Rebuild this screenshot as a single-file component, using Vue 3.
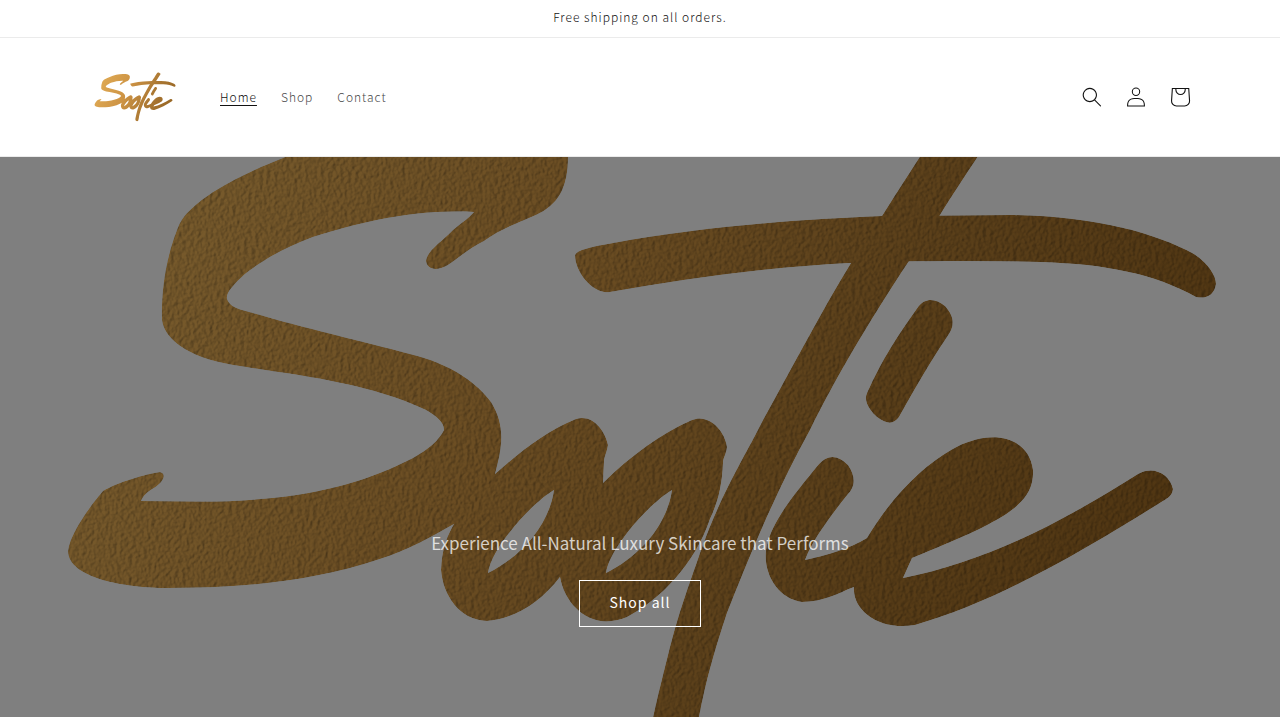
<script setup>
    import { ref } from 'vue';

    const announcement = 'Free shipping on all orders.'

    const links = [
        { id: 'home', label: 'Home' },
        { id: 'shop', label: 'Shop' },
        { id: 'contact', label: 'Contact' },
    ]
    const current = ref('home')
</script>

<template>
    <div class="page">
        <!-- brush mark shared by the header logo and the banner -->
        <svg class="defs" width="0" height="0" aria-hidden="true">
            <defs>
                <linearGradient id="gold" gradientUnits="userSpaceOnUse" x1="150" y1="150" x2="1130" y2="620">
                    <stop offset="0" stop-color="#e0ab55" />
                    <stop offset="0.4" stop-color="#cd9344" />
                    <stop offset="0.7" stop-color="#ac7934" />
                    <stop offset="1" stop-color="#976624" />
                </linearGradient>
                <linearGradient id="foil" gradientUnits="userSpaceOnUse" x1="150" y1="150" x2="1130" y2="620">
                    <stop offset="0" stop-color="#f2b85a" />
                    <stop offset="0.4" stop-color="#d69a45" />
                    <stop offset="0.7" stop-color="#b67f33" />
                    <stop offset="1" stop-color="#a06b24" />
                </linearGradient>
                <filter id="grain" x="0" y="0" width="100%" height="100%" color-interpolation-filters="sRGB">
                    <feTurbulence type="fractalNoise" baseFrequency="0.26" numOctaves="2" seed="4" result="noise" />
                    <feDiffuseLighting in="noise" surfaceScale="0.8" diffuseConstant="1.1" lighting-color="#ffffff" result="light">
                        <feDistantLight azimuth="200" elevation="58" />
                    </feDiffuseLighting>
                    <feBlend in="SourceGraphic" in2="light" mode="multiply" result="lit" />
                    <feComposite in="lit" in2="SourceGraphic" operator="in" />
                </filter>
                <g id="mark">
                    <path fill-rule="evenodd" d="M568 157C568 188 558 205 536 215C516 224 500 229 484 241C468 249 460 257 448 265C436 272 427 269 426 261C427 251 440 243 453 230C461 223 468 219 474 212C410 209 355 224 313 237C283 248 260 262 245 274C232 286 226 293 227 299C230 307 238 309 253 313C300 327 365 342 410 354C452 364 478 384 491 402C504 423 504 442 495 474C520 452 546 431 576 419C592 414 605 430 608 445C607 452 604 457 604 462L603 483C630 456 662 433 692 420C708 413 725 430 727 447C726 455 723 458 723 463C722 490 716 506 710 519C695 564 660 600 627 617C592 632 565 606 560 577C540 603 514 619 487 621C459 620 443 595 441 570C442 548 447 536 454 524C433 536 408 550 380 559C308 583 237 588 167 588C125 588 68 578 68 551C70 533 91 505 103 491C118 482 146 474 160 472C168 474 162 483 154 488C147 492 143 496 141 501C180 501 220 503 260 499C325 494 372 479 413 458C429 449 439 440 444 430C444 422 436 416 426 410C366 382 300 376 233 365C186 357 164 338 162 320C161 290 166 258 177 230C182 214 197 203 213 192C238 177 262 166 283 158C340 130 410 116 470 116C530 116 568 124 568 157ZM554 490C532 503 492 547 488 573C522 556 549 525 554 490ZM672 490C650 503 610 547 606 573C640 556 667 525 672 490Z" />
                    <path d="M575 255C577 250 590 247 613 243C710 225 810 219 882 216L1010 215C1095 216 1155 233 1194 254C1209 264 1216 276 1216 284C1214 296 1206 299 1196 297C1155 274 1106 264 1040 262C975 260 900 261 850 263C770 267 690 278 610 292C594 295 575 273 575 255Z" />
                    <path d="M882 216C900 187 930 142 950 109C956 96 970 92 984 99C998 106 1006 115 1002 121C980 153 958 186 940 215L909 261C866 326 833 383 810 430C775 493 748 560 727 613C715 649 706 680 699 717C694 752 691 777 681 784C666 790 645 778 646 757C648 738 655 706 670 647C680 608 691 579 700 553C721 493 742 462 763 420C793 366 821 312 851 263Z" />
                    <path d="M918 307C926 297 936 299 945 306C956 318 954 328 947 337C929 364 914 390 899 417C893 425 887 424 877 417C867 408 864 399 867 393C881 361 898 335 918 307Z" />
                    <path d="M819 464C828 454 838 455 848 465C857 478 854 488 848 494C829 518 812 541 805 560C828 555 848 549 867 538C892 496 923 466 951 450C990 427 1029 436 1033 470C1035 506 1000 522 912 558L903 578C983 562 1056 526 1138 474C1154 465 1170 475 1173 489C1172 496 1168 498 1163 501C1091 546 1000 601 915 625C879 631 852 610 854 587C838 593 824 602 802 602C779 599 763 575 766 550C770 524 791 498 819 464Z" />
                </g>
            </defs>
        </svg>

        <div class="announcement">
            <p>{{ announcement }}</p>
        </div>

        <header class="header">
            <div class="header-inner">
                <a class="logo" href="#home" aria-label="Sootie">
                    <svg viewBox="60 90 1162 705" fill="url(#gold)" aria-hidden="true">
                        <use href="#mark" />
                    </svg>
                </a>
                <nav class="menu">
                    <a
                        v-for="link in links"
                        :key="link.id"
                        :href="'#' + link.id"
                        :class="{ active: current === link.id }"
                        @click="current = link.id"
                    >{{ link.label }}</a>
                </nav>
                <div class="icons">
                    <button type="button" class="icon" aria-label="Search">
                        <svg class="small" viewBox="0 0 18 19">
                            <path fill-rule="evenodd" d="M11.03 11.68A5.784 5.784 0 112.85 3.5a5.784 5.784 0 018.18 8.18zm.26 1.12a6.78 6.78 0 11.72-.7l5.4 5.4a.5.5 0 11-.71.7l-5.41-5.4z" />
                        </svg>
                    </button>
                    <a class="icon" href="#account" aria-label="Log in">
                        <svg class="small" viewBox="0 0 18 19">
                            <path fill-rule="evenodd" d="M6 4.5a3 3 0 116 0 3 3 0 01-6 0zm3-4a4 4 0 100 8 4 4 0 000-8zm5.58 12.15c1.12.82 1.83 2.24 1.91 4.85H1.51c.08-2.6.79-4.03 1.9-4.85C4.66 11.75 6.5 11.5 9 11.5s4.35.26 5.58 1.15zM9 10.5c-2.5 0-4.65.24-6.17 1.35C1.27 12.98.5 14.93.5 18v.5h17V18c0-3.07-.77-5.02-2.33-6.15-1.52-1.1-3.67-1.35-6.17-1.35z" />
                        </svg>
                    </a>
                    <a class="icon" href="#cart" aria-label="Cart">
                        <svg class="large" viewBox="0 0 40 40">
                            <path fill-rule="evenodd" d="M15.75 11.8h-3.16l-.77 11.6a5 5 0 0 0 4.99 5.34h7.38a5 5 0 0 0 4.99-5.33l-.78-11.61zm0 1h-2.22l-.71 10.67a4 4 0 0 0 3.99 4.27h7.38a4 4 0 0 0 4-4.27l-.72-10.67h-2.22v.63a4.75 4.75 0 1 1-9.5 0zm8.5 0h-7.5v.63a3.75 3.75 0 1 0 7.5 0z" />
                        </svg>
                    </a>
                </div>
            </div>
        </header>

        <main class="banner">
            <svg class="banner-art" viewBox="0 157 1280 560" preserveAspectRatio="xMidYMid slice" fill="url(#foil)" aria-hidden="true">
                <use href="#mark" filter="url(#grain)" />
            </svg>
            <div class="banner-content">
                <p>Experience All-Natural Luxury Skincare that Performs</p>
                <a class="shop-all" href="#shop">Shop all</a>
            </div>
        </main>
    </div>
</template>

<style>
body {
  margin: 0;
  background: #fff;
}
</style>

<style scoped>
.page {
  font-family: "Noto Sans CJK SC", "Noto Sans", sans-serif;
  color: #121212;
}

.defs {
  position: absolute;
}

.announcement {
  padding: 6px 20px 10px;
  border-bottom: 1px solid #ebebeb;
  text-align: center;
}

.announcement p {
  margin: 0;
  font-size: 12px;
  font-weight: 300;
  line-height: 21px;
  letter-spacing: 1px;
}

.header {
  border-bottom: 1px solid #ebebeb;
}

.header-inner {
  display: flex;
  align-items: center;
  box-sizing: border-box;
  max-width: 1200px;
  min-height: 118px;
  margin: 0 auto;
  padding: 20px 38px 20px 54px;
}

.logo svg {
  display: block;
  width: 82px;
  height: 50px;
}

.menu {
  display: flex;
  flex: 1;
  gap: 24px;
  margin-left: 44px;
}

.menu a {
  color: #484848;
  font-size: 12px;
  font-weight: 300;
  line-height: 24px;
  letter-spacing: 1px;
  text-decoration: none;
}

.menu a:hover,
.menu a.active {
  color: #121212;
  text-decoration: underline;
  text-underline-offset: 3px;
}

.icons {
  display: flex;
}

.icon {
  display: flex;
  align-items: center;
  justify-content: center;
  width: 44px;
  height: 44px;
  padding: 0;
  border: none;
  background: none;
  cursor: pointer;
}

.icon svg {
  fill: #121212;
}

.small {
  width: 20px;
  height: 20px;
}

.large {
  width: 44px;
  height: 44px;
}

.banner {
  position: relative;
  display: flex;
  align-items: flex-end;
  justify-content: center;
  box-sizing: border-box;
  min-height: 560px;
  padding: 50px 50px 90px;
}

.banner-art {
  position: absolute;
  inset: 0;
  width: 100%;
  height: 100%;
}

.banner::after {
  content: "";
  position: absolute;
  inset: 0;
  background: rgba(0, 0, 0, 0.5);
}

.banner-content {
  position: relative;
  z-index: 1;
  text-align: center;
}

.banner-content p {
  margin: 0 0 21px;
  color: rgba(255, 255, 255, 0.75);
  font-size: 17px;
  line-height: 32px;
}

.shop-all {
  display: inline-block;
  box-sizing: border-box;
  min-width: 122px;
  padding: 0 30px 2px;
  border: 1px solid #fff;
  color: #fff;
  font-size: 14px;
  line-height: 43px;
  letter-spacing: 1px;
  text-decoration: none;
  vertical-align: top;
}
</style>
